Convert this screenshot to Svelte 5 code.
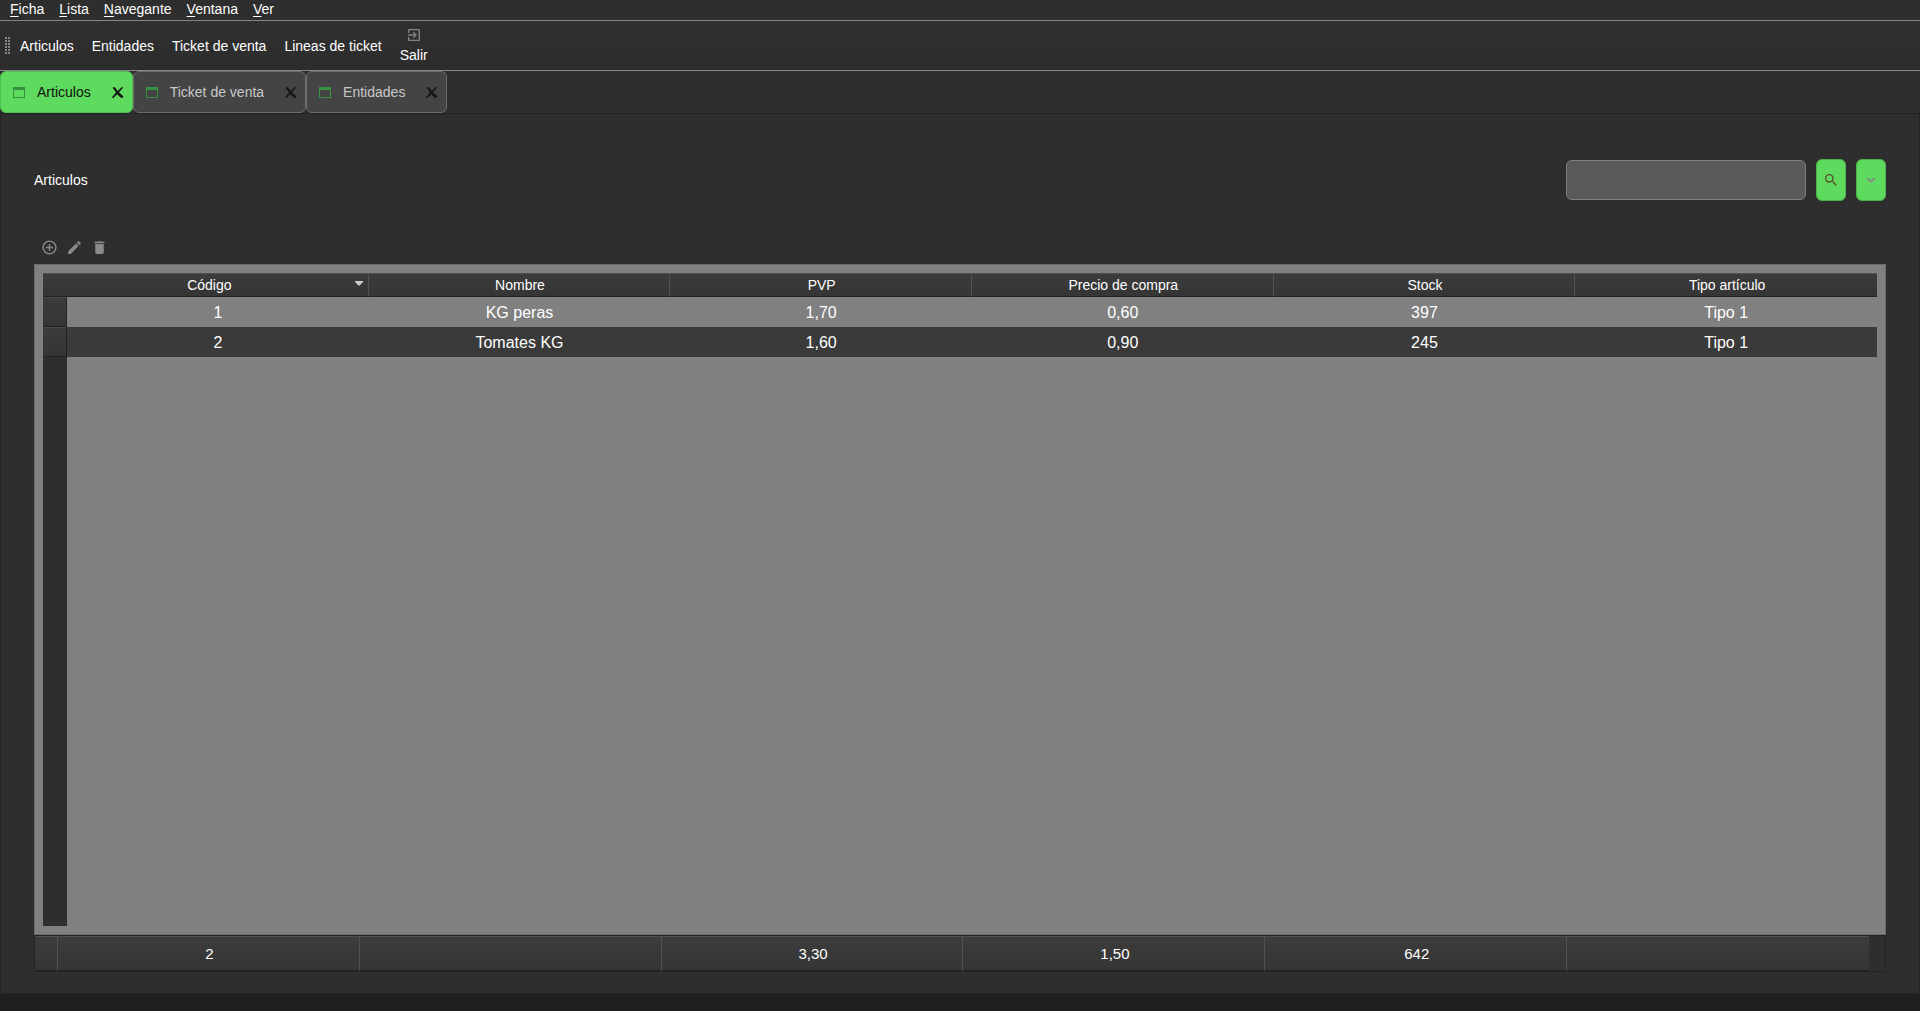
<script>
  const menus = ['Ficha', 'Lista', 'Navegante', 'Ventana', 'Ver'];
  const tools = ['Articulos', 'Entidades', 'Ticket de venta', 'Lineas de ticket'];
  const tabs = ['Articulos', 'Ticket de venta', 'Entidades'];
  const columns = ['Código', 'Nombre', 'PVP', 'Precio de compra', 'Stock', 'Tipo artículo'];
  const rows = [
    ['1', 'KG peras', '1,70', '0,60', '397', 'Tipo 1'],
    ['2', 'Tomates KG', '1,60', '0,90', '245', 'Tipo 1'],
  ];
  const totals = ['2', '', '3,30', '1,50', '642', ''];
  let active = $state('Articulos');
  let query = $state('');
</script>

<div class="window">
  <nav class="menubar">
    {#each menus as menu}
      <button><u>{menu[0]}</u>{menu.slice(1)}</button>
    {/each}
  </nav>

  <div class="toolbar">
    <svg class="grip" width="5" height="17" viewBox="0 0 5 17" shape-rendering="crispEdges" aria-hidden="true">
      <path d="M1 0v17M4 0v17" stroke="#858585" stroke-width="2" stroke-dasharray="2 1" />
    </svg>
    {#each tools as tool}
      <button>{tool}</button>
    {/each}
    <button class="exit">
      <svg width="16" height="16" viewBox="0 0 24 24" fill="#858585" aria-hidden="true">
        <path d="M10.090 15.590 11.500 17l5-5-5-5-1.410 1.410L12.670 11H3v2h9.670l-2.580 2.590zM19 3H5a2 2 0 0 0-2 2v4h2V5h14v14H5v-4H3v4a2 2 0 0 0 2 2h14c1.100 0 2-.9 2-2V5c0-1.100-.9-2-2-2z" />
      </svg>
      <span>Salir</span>
    </button>
  </div>

  <div class="tabs" role="tablist">
    {#each tabs as tab}
      <div class="tab" class:active={active === tab}>
        <button class="tab-name" role="tab" aria-selected={active === tab} onclick={() => (active = tab)}>
          <svg width="12" height="11" viewBox="0 0 12 11" aria-hidden="true">
            <path d="M0 0h12v11H0zM1 3v7h10V3z" fill="#369140" fill-rule="evenodd" />
          </svg>
          <span>{tab}</span>
        </button>
        <button class="close" aria-label="Cerrar {tab}">
          <svg width="13" height="13" viewBox="0 0 13 13" fill="#151515" aria-hidden="true">
            <path d="M1.500 1.500 4 1.200l2.600 3.800L11 1l1.300.4L8 6.300l4.300 4-.6 1.600-2.200-.3L6.200 8.200l-3.500 3.600-2.300.2L5 6.600z" />
          </svg>
        </button>
      </div>
    {/each}
  </div>

  <main>
    <header>
      <label for="search">Articulos</label>
      <input id="search" type="text" bind:value={query} />
      <button aria-label="Buscar">
        <svg width="16" height="16" viewBox="0 0 24 24" fill="#5b4a2c" aria-hidden="true">
          <path d="M15.500 14h-.79l-.28-.27A6.470 6.470 0 0 0 16 9.500 6.500 6.500 0 1 0 9.500 16c1.610 0 3.090-.59 4.230-1.570l.27.28v.79l5 4.990L20.490 19l-4.990-5zm-6 0a4.500 4.500 0 1 1 0-9 4.500 4.500 0 0 1 0 9z" />
        </svg>
      </button>
      <button aria-label="Más opciones">
        <svg width="16" height="16" viewBox="0 0 24 24" fill="#858585" aria-hidden="true">
          <path d="M7.410 8.090 12 12.670l4.590-4.580L18.500 10 12 16.500 5.500 10z" />
        </svg>
      </button>
    </header>

    <div class="actions">
      <button aria-label="Añadir">
        <svg width="17" height="17" viewBox="0 0 24 24" aria-hidden="true">
          <path d="M13 7h-2v4H7v2h4v4h2v-4h4v-2h-4V7zm-1-5a10 10 0 1 0 0 20 10 10 0 0 0 0-20zm0 18a8 8 0 1 1 0-16 8 8 0 0 1 0 16z" />
        </svg>
      </button>
      <button aria-label="Editar">
        <svg width="17" height="17" viewBox="0 0 24 24" aria-hidden="true">
          <path d="M3 17.250V21h3.750L17.810 9.940l-3.750-3.750L3 17.250zM20.710 7.040a1 1 0 0 0 0-1.410l-2.340-2.340a1 1 0 0 0-1.410 0l-1.830 1.830 3.750 3.750 1.830-1.830z" />
        </svg>
      </button>
      <button aria-label="Eliminar">
        <svg width="17" height="17" viewBox="0 0 24 24" aria-hidden="true">
          <path d="M6 19c0 1.100.9 2 2 2h8c1.100 0 2-.9 2-2V7H6v12zM19 4h-3.500l-1-1h-5l-1 1H5v2h14V4z" />
        </svg>
      </button>
    </div>

    <div class="frame">
      <table>
        <colgroup><col class="side" />{#each columns as _}<col />{/each}</colgroup>
        <thead>
          <tr>
            {#each columns as column, i}
              <th scope="col" colspan={i === 0 ? 2 : 1}>
                {#if i === 0}
                  <div class="sort">
                    <span>{column}</span>
                    <svg width="8" height="5" viewBox="0 0 8 5" fill="#ccc" aria-hidden="true"><path d="M0 0h8v1L4 5 0 1z" /></svg>
                  </div>
                {:else}{column}{/if}
              </th>
            {/each}
          </tr>
        </thead>
        <tbody>
          {#each rows as row}
            <tr class="row">
              <td class="handle"></td>
              {#each row as cell}<td>{cell}</td>{/each}
            </tr>
          {/each}
          <tr class="rest"><td></td><td colspan="6"></td></tr>
        </tbody>
      </table>
    </div>

    <div class="totals">
      <table>
        <colgroup><col class="side" />{#each columns as _}<col />{/each}</colgroup>
        <tbody>
          <tr>
            <td></td>
            {#each totals as total}<td>{total}</td>{/each}
          </tr>
        </tbody>
      </table>
    </div>
  </main>
  <footer></footer>
</div>

<style>
  :global(body) { background: #2e2e2e; }
  .window {
    box-sizing: border-box;
    min-height: 100vh;
    display: flex;
    flex-direction: column;
    background: #2e2e2e;
    color: #fff;
    font: 14px/16px "Liberation Sans", Arial, sans-serif;
  }
  button { border: 0; margin: 0; padding: 0; background: none; color: inherit; font: inherit; }
  svg { display: block; flex: none; }

  .menubar { display: flex; gap: 1px; height: 20px; padding: 0 3px; border-bottom: 1px solid #858585; }
  .menubar button { padding: 0 7px 2px; }
  .menubar u { text-underline-offset: 2px; }

  .toolbar {
    display: flex;
    align-items: center;
    gap: 18px;
    height: 49px;
    padding-left: 5px;
    border-bottom: 1px solid #858585;
    background: linear-gradient(#303030, #2c2c2c);
  }
  .grip { margin-right: -8px; }
  .exit { display: flex; flex-direction: column; align-items: center; gap: 4px; padding-bottom: 2px; }

  .tabs { display: flex; }
  .tab {
    box-sizing: border-box;
    height: 42px;
    display: flex;
    align-items: stretch;
    border: 1px solid #6c6c6c;
    border-radius: 6px;
    background: #444;
    color: #c8c8c8;
  }
  .tab.active { background: #5edb5e; border-color: #4fc152; color: #111; }
  .tab-name { display: flex; align-items: center; gap: 12px; padding-left: 12px; }
  .close { padding: 0 8px 0 20px; }

  main {
    flex: 1;
    display: flex;
    flex-direction: column;
    padding: 45px 33px 21px;
    border: 1px solid #232323;
  }
  header { display: flex; align-items: center; gap: 10px; }
  header label { flex: 1; }
  header input {
    box-sizing: border-box;
    width: 240px;
    height: 40px;
    padding: 0 8px;
    border: 1px solid #808080;
    border-radius: 6px;
    background: #5a5a5a;
    color: #fff;
    font: inherit;
  }
  header button {
    display: flex;
    align-items: center;
    justify-content: center;
    width: 30px;
    height: 42px;
    border: 1px solid #4db04d;
    border-radius: 6px;
    background: #5edb5e;
  }

  .actions { display: flex; gap: 8px; padding: 38px 7px 8px; fill: #8a8a8a; }

  table { width: 100%; table-layout: fixed; border-collapse: separate; border-spacing: 0; }
  th, td { box-sizing: border-box; padding: 0 0 0 2px; text-align: center; font-weight: 400; }
  .side { width: 24px; }

  .frame {
    flex: 1;
    display: flex;
    padding: 8px;
    border: 1px solid #6b6b6b;
    background: #808080;
  }
  th {
    height: 24px;
    border-top: 1px solid #505050;
    border-right: 1px solid #525252;
    border-bottom: 1px solid #222;
    background: linear-gradient(#3c3c3c, #353535);
  }
  th:last-child { border-right: 0; }
  .sort { display: flex; align-items: center; padding: 0 5px 0 19px; }
  .sort span { flex: 1; }
  .sort svg { margin-bottom: 4px; }
  .row td { height: 30px; padding: 1px 0 0; font-size: 16px; line-height: 18px; }
  .row:nth-child(even) td { background: #3a3a3a; }
  .row .handle, .row:nth-child(even) .handle {
    border-top: 1px solid #4a4a4a;
    border-right: 1px solid #222;
    border-bottom: 1px solid #222;
    background: linear-gradient(#3b3b3b, #353535);
  }
  .rest td:first-child { background: #2e2e2e; }

  .totals { padding-right: 16px; border: 1px solid #232323; }
  .totals .side { width: 23px; }
  .totals td {
    height: 35px;
    border-top: 1px solid #505050;
    border-right: 1px solid #525252;
    border-bottom: 1px solid #222;
    background: linear-gradient(#3c3c3c, #353535);
    font-size: 15px;
  }
  .totals td:last-child { border-right: 0; }

  footer { height: 17px; background: #1f1f1f; }
</style>
